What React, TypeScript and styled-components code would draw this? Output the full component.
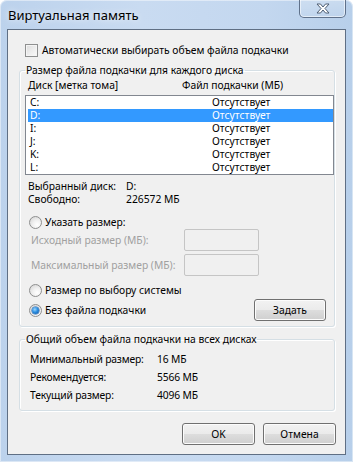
import React, { FC, useState } from 'react';
import styled, { createGlobalStyle, css } from 'styled-components';

const GlobalStyle = createGlobalStyle`
  html, body {
    margin: 0;
    padding: 0;
    background: #ffffff;
  }
  body {
    font-family: "Noto Sans", "Open Sans", sans-serif;
    font-size: 10.3px;
    color: #000000;
    white-space: nowrap;
  }
`;

type Disk = { letter: string; size: string };

const disks: Disk[] = [
  { letter: 'C:', size: 'Отсутствует' },
  { letter: 'D:', size: 'Отсутствует' },
  { letter: 'I:', size: 'Отсутствует' },
  { letter: 'J:', size: 'Отсутствует' },
  { letter: 'K:', size: 'Отсутствует' },
  { letter: 'L:', size: 'Отсутствует' },
];

const totals = [
  { label: 'Минимальный размер:', value: '16 МБ' },
  { label: 'Рекомендуется:', value: '5566 МБ' },
  { label: 'Текущий размер:', value: '4096 МБ' },
];

const Window = styled.div`
  width: 353px;
  height: 462px;
  box-sizing: border-box;
  padding: 0 7px 7px 7px;
  display: flex;
  flex-direction: column;
  border-radius: 7px 7px 0 0;
  background: linear-gradient(90deg, #bcd2ec 0%, #c9dbf1 40%, #c3d7ef 75%, #b7cfea 100%);
  box-shadow: inset 0 0 0 1px rgba(255, 255, 255, 0.45);
`;

const TitleBar = styled.div`
  height: 29px;
  flex-shrink: 0;
  display: flex;
  justify-content: space-between;
  align-items: flex-start;
`;

const Title = styled.span`
  padding: 7px 0 0 1px;
  line-height: 16px;
  font-size: 13px;
  color: #000000;
  text-shadow: 0 0 6px rgba(255, 255, 255, 0.9);
`;

const CloseButton = styled.div`
  width: 47px;
  height: 19px;
  box-sizing: border-box;
  margin-top: -1px;
  display: flex;
  align-items: center;
  justify-content: center;
  border: 1px solid rgba(60, 78, 104, 0.75);
  border-top: none;
  border-radius: 0 0 5px 5px;
  background: linear-gradient(180deg, rgba(255, 255, 255, 0.25), rgba(255, 255, 255, 0.08));
  box-shadow: inset 0 0 0 1px rgba(255, 255, 255, 0.55);
`;

const Client = styled.div`
  flex: 1;
  box-sizing: border-box;
  border: 1px solid #5f6f84;
  background: #f0f0f0;
  padding: 12px 10px 0 11px;
  display: flex;
  flex-direction: column;
`;

const CheckRow = styled.label`
  display: flex;
  align-items: center;
  gap: 4px;
  height: 16px;
  margin-left: 6px;
`;

const CheckBox = styled.span`
  width: 13px;
  height: 13px;
  box-sizing: border-box;
  border: 1px solid #8e8f8f;
  background: linear-gradient(135deg, #dcdcdc, #fbfbfb);
  box-shadow: inset 0 0 0 1px #f4f4f4;
`;

const Group = styled.fieldset<{ $gap?: number }>`
  margin: ${(p) => p.$gap ?? 4}px 0 0 0;
  padding: 0;
  border: 1px solid #d5dfe5;
  border-radius: 3px;
  box-shadow: inset 1px 1px 0 #ffffff, 1px 1px 0 #ffffff;
  min-width: 0;
`;

const Legend = styled.legend`
  margin-left: 5px;
  padding: 0 1px;
  line-height: 16px;
  font-size: 10.3px;
`;

const GroupBody = styled.div<{ $pad: string }>`
  padding: ${(p) => p.$pad};
  display: flex;
  flex-direction: column;
`;

const HeaderRow = styled.div`
  display: grid;
  grid-template-columns: 154px 1fr;
  padding-left: 3px;
  line-height: 14px;
`;

const ListBox = styled.div`
  margin-top: 3px;
  box-sizing: border-box;
  height: 80px;
  border: 1px solid #828790;
  background: #ffffff;
  padding: 0 0 0 2px;
`;

const ListRow = styled.div<{ $selected?: boolean }>`
  display: grid;
  grid-template-columns: 182px 1fr;
  height: 13px;
  line-height: 13px;
  padding-left: 2px;
  ${(p) =>
    p.$selected &&
    css`
      background: #3399ff;
      color: #ffffff;
    `}
`;

const InfoRow = styled.div<{ $first?: boolean }>`
  display: grid;
  grid-template-columns: 98px 1fr;
  margin: ${(p) => (p.$first ? '5px' : '0')} 0 0 3px;
  line-height: 13px;
`;

const RadioRow = styled.label<{ $gap: number }>`
  display: flex;
  align-items: center;
  gap: 3px;
  height: 14px;
  margin: ${(p) => p.$gap}px 0 0 4px;
`;

const Radio = styled.span<{ $checked?: boolean }>`
  width: 13px;
  height: 13px;
  box-sizing: border-box;
  border-radius: 50%;
  border: 1px solid #8e8f8f;
  background: radial-gradient(circle at 65% 70%, #ffffff 0%, #f1f1f1 40%, #d0d0d0 100%);
  display: flex;
  align-items: center;
  justify-content: center;
  &::after {
    content: '';
    display: ${(p) => (p.$checked ? 'block' : 'none')};
    width: 7px;
    height: 7px;
    border-radius: 50%;
    background: radial-gradient(circle at 40% 35%, #9ad6ff 0%, #2c8ee0 45%, #0c4f9c 100%);
    box-shadow: 0 0 0 0.5px #1c5fa8;
  }
`;

const SizeRow = styled.div<{ $gap: number }>`
  display: grid;
  grid-template-columns: 153px 75px;
  align-items: center;
  margin: ${(p) => p.$gap}px 0 0 6px;
  color: #a0a0a0;
`;

const SizeInput = styled.div`
  height: 22px;
  box-sizing: border-box;
  border: 1px solid #c5c5c5;
  border-radius: 2px;
  background: #f0f0f0;
`;

const NoFileRow = styled.div`
  display: flex;
  align-items: center;
  justify-content: space-between;
  margin: 2px 8px 0 0;
`;

const Button = styled.button<{ $width?: number }>`
  width: ${(p) => p.$width ?? 73}px;
  height: 22px;
  box-sizing: border-box;
  padding: 0;
  font-family: inherit;
  font-size: 10.3px;
  color: #000000;
  border: 1px solid #707070;
  border-radius: 3px;
  background: linear-gradient(180deg, #f2f2f2 0%, #ebebeb 48%, #dddddd 52%, #cfcfcf 100%);
  box-shadow: inset 0 0 0 1px #fcfcfc;
`;

const TotalRow = styled.div`
  display: grid;
  grid-template-columns: 127px 1fr;
  padding-left: 10px;
  line-height: 18px;
  letter-spacing: -0.15px;
`;

const Footer = styled.div`
  display: flex;
  justify-content: flex-end;
  gap: 8px;
  margin: 12px -1px 0 0;
`;

const CloseGlyph: FC = () => (
  <svg width="14" height="11" viewBox="0 0 14 11">
    <path
      d="M1 1 H4.5 L7 4 L9.5 1 H13 L9 5.5 L13 10 H9.5 L7 7 L4.5 10 H1 L5 5.5 Z"
      fill="#ffffff"
      stroke="#4f5f74"
      strokeWidth="1"
      strokeLinejoin="round"
    />
  </svg>
);

const App: FC = () => {
  const [selected, setSelected] = useState(1);
  return (
    <>
      <GlobalStyle />
      <Window>
        <TitleBar>
          <Title>Виртуальная память</Title>
          <CloseButton>
            <CloseGlyph />
          </CloseButton>
        </TitleBar>
        <Client>
          <CheckRow>
            <CheckBox />
            Автоматически выбирать объем файла подкачки
          </CheckRow>

          <Group>
            <Legend>Размер файла подкачки для каждого диска</Legend>
            <GroupBody $pad="0 0 5px 5px">
              <HeaderRow>
                <span>Диск [метка тома]</span>
                <span>Файл подкачки (МБ)</span>
              </HeaderRow>
              <ListBox>
                {disks.map((d, i) => (
                  <ListRow key={d.letter} $selected={i === selected} onClick={() => setSelected(i)}>
                    <span>{d.letter}</span>
                    <span>{d.size}</span>
                  </ListRow>
                ))}
              </ListBox>
              <InfoRow $first>
                <span>Выбранный диск:</span>
                <span>{disks[selected].letter}</span>
              </InfoRow>
              <InfoRow>
                <span>Свободно:</span>
                <span>226572 МБ</span>
              </InfoRow>
              <RadioRow $gap={9}>
                <Radio />
                Указать размер:
              </RadioRow>
              <SizeRow $gap={0}>
                <span>Исходный размер (МБ):</span>
                <SizeInput />
              </SizeRow>
              <SizeRow $gap={3}>
                <span>Максимальный размер (МБ):</span>
                <SizeInput />
              </SizeRow>
              <RadioRow $gap={7}>
                <Radio />
                Размер по выбору системы
              </RadioRow>
              <NoFileRow>
                <RadioRow $gap={0}>
                  <Radio $checked />
                  Без файла подкачки
                </RadioRow>
                <Button $width={72}>Задать</Button>
              </NoFileRow>
            </GroupBody>
          </Group>

          <Group $gap={4}>
            <Legend>Общий объем файла подкачки на всех дисках</Legend>
            <GroupBody $pad="3px 0 6px 0">
              {totals.map((t) => (
                <TotalRow key={t.label}>
                  <span>{t.label}</span>
                  <span>{t.value}</span>
                </TotalRow>
              ))}
            </GroupBody>
          </Group>

          <Footer>
            <Button>OK</Button>
            <Button>Отмена</Button>
          </Footer>
        </Client>
      </Window>
    </>
  );
};

export default App;
